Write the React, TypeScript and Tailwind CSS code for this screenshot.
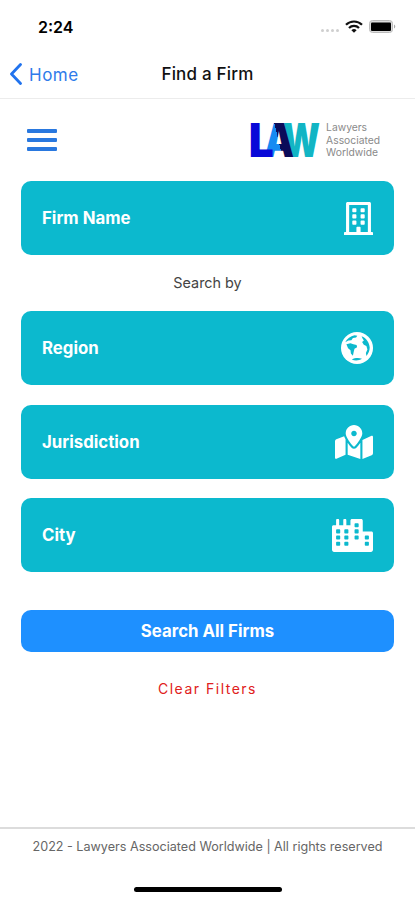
import type { ReactNode } from 'react';
import { FaCity, FaMapMarkedAlt, FaRegBuilding } from 'react-icons/fa';

function StatusBar() {
  return (
    <div className="flex h-[53px] items-center justify-between pl-[38px] pr-[19px]">
      <span className="text-[16px] font-semibold text-black">2:24</span>
      <div className="flex items-center">
        {/* no signal */}
        <div className="mt-2 flex gap-[2px]">
          <span className="size-[3px] rounded-full bg-[#cfcfcf]" />
          <span className="size-[3px] rounded-full bg-[#cfcfcf]" />
          <span className="size-[3px] rounded-full bg-[#cfcfcf]" />
          <span className="size-[3px] rounded-full bg-[#cfcfcf]" />
        </div>
        <svg className="ml-[6px] h-[13px] w-[18px]" viewBox="0 0 18 13" fill="none" stroke="#111" strokeWidth="2.2">
          <path d="M1 4.8a11.3 11.3 0 0 1 16 0" />
          <path d="M4 8a7 7 0 0 1 10 0" />
          <path d="M9 12.8 6.4 10.2a3.7 3.7 0 0 1 5.2 0z" fill="#111" stroke="none" />
        </svg>
        <svg className="ml-[6px] h-[13px] w-[27px]" viewBox="0 0 27 13">
          <rect x="0.5" y="0.5" width="23" height="12" rx="3" fill="#ddd" stroke="#bbb" />
          <rect x="2" y="2.5" width="20" height="8.5" rx="1" fill="#000" />
          <path d="M25 4.5a2.2 2.2 0 0 1 0 4z" fill="#aaa" />
        </svg>
      </div>
    </div>
  );
}

function Logo() {
  return (
    <div className="flex items-center">
      <svg className="-my-[12px] h-[60px] w-[72px] overflow-visible" viewBox="0 0 72 60" fontFamily="Inter, sans-serif" fontWeight="900" fontSize="46.5">
        <defs>
          {/* slanted split between the two legs of the A */}
          <linearGradient id="letterA" gradientUnits="userSpaceOnUse" x1="12" y1="34" x2="46" y2="26">
            <stop offset="0.48" stopColor="#168bf2" />
            <stop offset="0.48" stopColor="#0b0b59" />
          </linearGradient>
        </defs>
        <text x="33" y="47" fill="#12b5c4" textLength="37" lengthAdjust="spacingAndGlyphs">W</text>
        <text x="14" y="47" fill="url(#letterA)" textLength="30" lengthAdjust="spacingAndGlyphs">A</text>
        <text x="-1.2" y="47" fill="#0908d8" textLength="25" lengthAdjust="spacingAndGlyphs">L</text>
      </svg>
      <div className="ml-[4px] text-[10.3px] leading-[12.5px] text-[#8a8a8a]">
        <div>Lawyers</div>
        <div>Associated</div>
        <div>Worldwide</div>
      </div>
    </div>
  );
}

function Globe() {
  return (
    <svg className="size-[32px]" viewBox="0 0 32 32">
      <circle cx="16" cy="16" r="16" fill="#fff" />
      <g fill="#0cb9ce">
        <path d="M4.2 10.2C6 6.6 9.5 4 13.5 3.2l2.8.6-1.2 1.8-3.2.3-1.5 2.3-3 .4z" />
        <path d="M5.4 12.2l4-1 3 1.1 3.2.6.5 2.3-2.6 1.6-.6 2.3-1 4.6-2-2.2-.4-3.3-2.4-2z" />
        <path d="M20.6 4.2c4.6 1.8 7.8 6.2 8.1 11.3-.1 3.3-1.2 6.2-3.3 8.4l-.5-2.9 1.5-3.4-1-3.6-2.6-1.3-1.7-2.6 1.8-1.6-1.2-1.8z" />
        <path d="M10.8 27.5c3-1.7 6.7-1.9 10.2-.8-3.1 2-7 2.2-10.2.8z" />
      </g>
    </svg>
  );
}

function Field({ label, children }: { label: string; children: ReactNode }) {
  return (
    <button className="flex h-[74px] w-full items-center justify-between rounded-[10px] bg-[#0cb9ce] px-[21px] text-white">
      <span className="pt-[2px] text-[16.8px] font-bold">{label}</span>
      {children}
    </button>
  );
}

export default function App() {
  return (
    <div className="flex h-[900px] w-[415px] flex-col bg-white font-['Inter',sans-serif]">
      <StatusBar />
      <div className="grid h-[46px] grid-cols-[1fr_auto_1fr] items-center border-b border-[#ececec] pb-[3px]">
        <div className="flex items-center gap-[7px] pl-[10px] text-[#2f7bea]">
          <svg className="h-[22px] w-[12px]" viewBox="0 0 12 22" fill="none" stroke="#2173ee" strokeWidth="2.8" strokeLinecap="round" strokeLinejoin="round">
            <path d="M10.5 1.5 1.5 11l9 9.5" />
          </svg>
          <span className="pt-[3px] text-[17px] tracking-[0.5px]">Home</span>
        </div>
        <h1 className="pt-[2px] text-[17px] font-medium tracking-[0.2px] text-[#111]">Find a Firm</h1>
      </div>

      <div className="flex h-[82px] items-center justify-between pl-[27px] pr-[35px]">
        <div className="flex w-[30px] flex-col gap-[5px]">
          <span className="h-[4px] rounded-[1px] bg-[#2978df]" />
          <span className="h-[4px] rounded-[1px] bg-[#2978df]" />
          <span className="h-[4px] rounded-[1px] bg-[#2978df]" />
        </div>
        <Logo />
      </div>

      <div className="flex flex-col px-[21px]">
        <Field label="Firm Name">
          <FaRegBuilding className="h-[35px] w-[29px]" />
        </Field>
        <p className="flex h-[56px] items-center justify-center text-[14.4px] text-[#444]">Search by</p>
        <div className="flex flex-col gap-[19.5px]">
          <Field label="Region">
            <Globe />
          </Field>
          <Field label="Jurisdiction">
            <FaMapMarkedAlt className="h-[34px] w-[38px]" />
          </Field>
          <Field label="City">
            <FaCity className="h-[33px] w-[41px]" />
          </Field>
        </div>
        <button className="mt-[38px] h-[42px] rounded-[10px] bg-[#1e90ff] pt-[2px] text-[16.8px] font-bold text-white">
          Search All Firms
        </button>
        <button className="mt-[26px] text-[14px] tracking-[1.5px] text-[#e02020]">Clear Filters</button>
      </div>

      <div className="mt-auto h-[73px] border-t-2 border-[#dcdcdc] pt-[9px] text-center text-[12.6px] text-[#666]">
        <p>2022 - Lawyers Associated Worldwide | All rights reserved</p>
        <div className="mx-auto mt-[30px] h-[5px] w-[148px] rounded-full bg-black" />
      </div>
    </div>
  );
}
